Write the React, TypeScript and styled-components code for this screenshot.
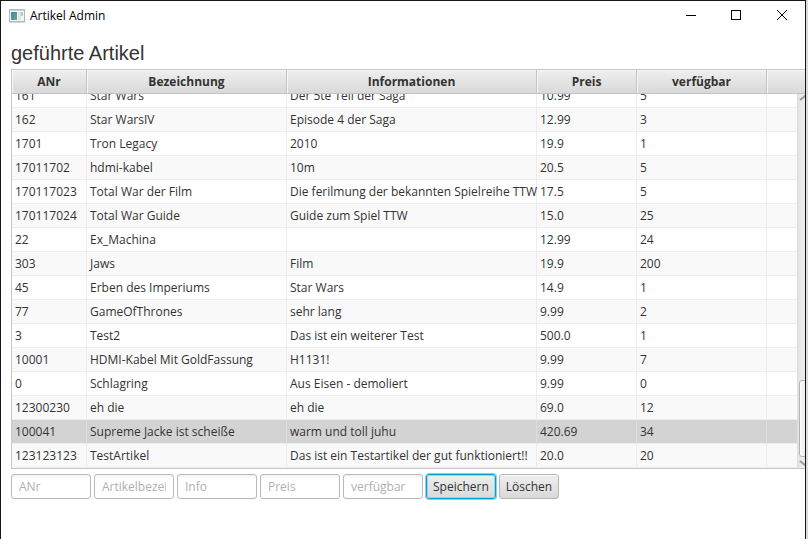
import React, { useLayoutEffect, useRef, useState } from "react";
import styled, { createGlobalStyle, css } from "styled-components";

const GlobalStyle = createGlobalStyle`
  *, *::before, *::after { box-sizing: border-box; }
  body {
    margin: 0;
    background: #dcdcdc;
    color: #333;
    font-family: "Open Sans", "Noto Sans", sans-serif;
    font-size: 12px;
  }
`;

const Window = styled.div`
  display: flex;
  flex-direction: column;
  min-height: 100vh;
  margin-right: 2px;
  border: 1px solid #17141a;
  border-bottom: 0;
  background: #fff;
  overflow: hidden;
`;

const TitleBar = styled.header`
  display: flex;
  align-items: center;
  height: 29px;
  padding-left: 8px;
  color: #000;
`;

const WindowTitle = styled.span`
  flex: 1;
  padding-left: 5px;
  line-height: 16px;
`;

const WindowButton = styled.button`
  display: grid;
  place-items: center;
  width: 46px;
  height: 29px;
  padding: 0;
  border: 0;
  background: none;
  color: #000;
`;

const Content = styled.main`
  display: flex;
  flex-direction: column;
  gap: 5px;
  padding: 10px 0 0 10px;
`;

const Heading = styled.h1`
  margin: 0;
  padding-top: 2px;
  font: 400 20px/22px "Liberation Sans", Arial, sans-serif;
`;

const TableFrame = styled.div`
  position: relative;
  margin-right: -7px;
  border: 1px solid #c8c8c8;
`;

const Viewport = styled.div`
  height: 398px;
  overflow: hidden;
`;

const Table = styled.table`
  width: 100%;
  table-layout: fixed;
  border-collapse: separate;
  border-spacing: 0;
`;

const Column = styled.col<{ $width?: number }>`
  ${(p) => p.$width && css`width: ${p.$width}px;`}
`;

const HeadCell = styled.th`
  position: sticky;
  top: 0;
  height: 24px;
  padding: 0;
  border-right: 1px solid #c4c4c4;
  border-bottom: 1px solid #c4c4c4;
  background: linear-gradient(#efefef, #d9d9d9);
  box-shadow: inset 1px 1px 0 #f6f6f6;
  font-weight: 700;
  line-height: 22px;
  text-align: center;
`;

const Row = styled.tr<{ $selected: boolean }>`
  background: #fff;
  &:nth-child(even) { background: #f9f9f9; }
  ${(p) => p.$selected && css`&& { background: #d3d3d3; }`}
`;

const Cell = styled.td`
  height: 24px;
  padding: 0 0 0 3px;
  border-right: 1px solid #ededed;
  border-bottom: 1px solid #ededed;
  line-height: 22px;
  white-space: nowrap;
  ${Row}[aria-selected="true"] & { border-right-color: #dedede; }
`;

const ScrollBar = styled.div`
  position: absolute;
  top: 24px;
  right: 0;
  bottom: 0;
  display: flex;
  flex-direction: column;
  justify-content: space-between;
  width: 14px;
  padding: 1px 1px 1px 2px;
  background: linear-gradient(90deg, #dedede, #ebebeb 4px);
`;

const ScrollThumb = styled.div`
  height: 77px;
  margin: auto 0 3px;
  border: 1px solid #b4b4b4;
  border-radius: 3px;
  background: linear-gradient(90deg, #fbfbfb, #e0e0e0);
`;

const EntryForm = styled.form`
  display: flex;
  gap: 3px;
`;

const Field = styled.input`
  width: 80px;
  height: 25px;
  padding: 0 7px;
  border: 1px solid #b9b9b9;
  border-radius: 3px;
  background: linear-gradient(#f3f3f3, #fff 4px);
  color: #333;
  font: inherit;
  &::placeholder { color: #b0b0b0; opacity: 1; }
`;

const Button = styled.button<{ $primary?: boolean }>`
  height: 25px;
  padding: 0 6px;
  border: 1px solid #b5b5b5;
  border-radius: 3px;
  background: linear-gradient(#efefef, #d9d9d9);
  box-shadow: inset 0 1px 0 #fafafa;
  color: #333;
  font: inherit;
  ${(p) =>
    p.$primary &&
    css`
      border-color: #039ed3;
      box-shadow: inset 0 0 0 1px #9fd4e8, 0 0 0 1px #8fd0e8;
    `}
`;

const columns = [
  { label: "ANr", width: 75 },
  { label: "Bezeichnung", width: 200 },
  { label: "Informationen", width: 250 },
  { label: "Preis", width: 100 },
  { label: "verfügbar", width: 130 },
];

const articles = [
  ["161", "Star Wars", "Der 5te Teil der Saga", "10.99", "5"],
  ["162", "Star WarsIV", "Episode 4 der Saga", "12.99", "3"],
  ["1701", "Tron Legacy", "2010", "19.9", "1"],
  ["17011702", "hdmi-kabel", "10m", "20.5", "5"],
  ["170117023", "Total War der Film", "Die ferilmung der bekannten Spielreihe TTW", "17.5", "5"],
  ["170117024", "Total War Guide", "Guide zum Spiel TTW", "15.0", "25"],
  ["22", "Ex_Machina", "", "12.99", "24"],
  ["303", "Jaws", "Film", "19.9", "200"],
  ["45", "Erben des Imperiums", "Star Wars", "14.9", "1"],
  ["77", "GameOfThrones", "sehr lang", "9.99", "2"],
  ["3", "Test2", "Das ist ein weiterer Test", "500.0", "1"],
  ["10001", "HDMI-Kabel Mit GoldFassung", "H1131!", "9.99", "7"],
  ["0", "Schlagring", "Aus Eisen - demoliert", "9.99", "0"],
  ["12300230", "eh die", "eh die", "69.0", "12"],
  ["100041", "Supreme Jacke ist scheiße", "warm und toll juhu", "420.69", "34"],
  ["123123123", "TestArtikel", "Das ist ein Testartikel der gut funktioniert!!", "20.0", "20"],
];

const fields = ["ANr", "Artikelbezeichnung", "Info", "Preis", "verfügbar"];

const AppIcon = () => (
  <svg width="16" height="14" viewBox="0 0 16 14" aria-hidden="true">
    <defs>
      <linearGradient id="pane" x1="0" y1="0" x2="1" y2="1">
        <stop offset="0" stopColor="#4a7fae" />
        <stop offset="1" stopColor="#59b184" />
      </linearGradient>
    </defs>
    <rect x="0.5" y="0.5" width="15" height="12" fill="#f4f5f6" stroke="#b3b7bb" />
    <path d="M1 1.5h14" stroke="#cfd2d5" />
    <rect x="2" y="3" width="6" height="8" fill="url(#pane)" />
    <rect x="9" y="3" width="3" height="8" fill="#e0e3e6" />
    <rect x="12" y="3" width="2" height="4" fill="#a9d0bd" />
    <path d="M0 13.5h16" stroke="#d9d9d9" />
  </svg>
);

const Arrow = ({ d }: { d: string }) => (
  <svg width="11" height="7" viewBox="0 0 11 7" fill="none" stroke="#9a9a9a" strokeWidth="2" aria-hidden="true">
    <path d={d} />
  </svg>
);

export default function App() {
  const viewport = useRef<HTMLDivElement>(null);
  const [selected, setSelected] = useState("100041");

  useLayoutEffect(() => {
    const el = viewport.current;
    if (el) el.scrollTop = el.scrollHeight;
  }, []);

  return (
    <>
      <GlobalStyle />
      <Window>
        <TitleBar>
          <AppIcon />
          <WindowTitle>Artikel Admin</WindowTitle>
          <WindowButton aria-label="Minimieren">
            <svg width="11" height="11" stroke="currentColor"><path d="M1 5.5h10" /></svg>
          </WindowButton>
          <WindowButton aria-label="Maximieren">
            <svg width="11" height="11" fill="none" stroke="currentColor"><rect x="0.5" y="0.5" width="9" height="9" /></svg>
          </WindowButton>
          <WindowButton aria-label="Schließen">
            <svg width="11" height="11" stroke="currentColor"><path d="M0 0l10 10M10 0l-10 10" /></svg>
          </WindowButton>
        </TitleBar>
        <Content>
          <Heading>geführte Artikel</Heading>
          <TableFrame>
            <Viewport ref={viewport}>
              <Table>
                <colgroup>
                  {columns.map((c) => <Column key={c.label} $width={c.width} />)}
                  <Column />
                </colgroup>
                <thead>
                  <tr>
                    {columns.map((c) => <HeadCell key={c.label} scope="col">{c.label}</HeadCell>)}
                    <HeadCell as="td" />
                  </tr>
                </thead>
                <tbody>
                  {articles.map((a) => (
                    <Row
                      key={a[0]}
                      $selected={a[0] === selected}
                      aria-selected={a[0] === selected}
                      onClick={() => setSelected(a[0])}
                    >
                      {a.map((value, i) => <Cell key={i}>{value}</Cell>)}
                      <Cell />
                    </Row>
                  ))}
                </tbody>
              </Table>
            </Viewport>
            <ScrollBar>
              <Arrow d="M1 5l5-4 5 4" />
              <ScrollThumb />
              <Arrow d="M1 1l5 4 5-4" />
            </ScrollBar>
          </TableFrame>
          <EntryForm onSubmit={(e) => e.preventDefault()}>
            {fields.map((f) => <Field key={f} type="text" placeholder={f} aria-label={f} />)}
            <Button type="submit" $primary>Speichern</Button>
            <Button type="button">Löschen</Button>
          </EntryForm>
        </Content>
      </Window>
    </>
  );
}
